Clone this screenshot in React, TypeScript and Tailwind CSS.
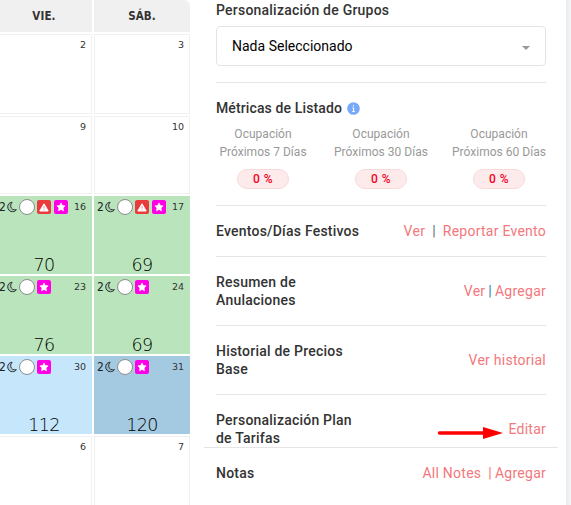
import type { ReactNode } from "react";

type Day = {
  date: number;
  price?: number;
  alert?: boolean;
  color?: string;
};

const weeks: Day[][] = [
  [{ date: 2 }, { date: 3 }],
  [{ date: 9 }, { date: 10 }],
  [
    { date: 16, price: 70, alert: true, color: "bg-[#bae4bc]" },
    { date: 17, price: 69, alert: true, color: "bg-[#bae4bc]" },
  ],
  [
    { date: 23, price: 76, color: "bg-[#bae4bc]" },
    { date: 24, price: 69, color: "bg-[#bae4bc]" },
  ],
  [
    { date: 30, price: 112, color: "bg-[#c6e7fb]" },
    { date: 31, price: 120, color: "bg-[#a4cae1]" },
  ],
  [{ date: 6 }, { date: 7 }],
];

const Moon = () => (
  <svg viewBox="0 0 10 12" className="mb-px ml-px h-3 w-2.5 shrink-0">
    <path
      d="M5.2 1.2C1.9 1.5 .7 3.7 .7 5.9C.7 8.7 2.8 10.7 5.5 10.7C7.3 10.7 8.7 9.9 9.4 8.7C6.4 9.4 3.9 7.9 3.7 5.2C3.6 3.6 4.1 2.2 5.2 1.2Z"
      fill="#30373a"
      fillOpacity=".15"
      stroke="#262b2d"
      strokeWidth=".95"
      strokeLinejoin="round"
    />
  </svg>
);

const Alert = () => (
  <span className="ml-0.5 flex size-3.5 shrink-0 items-center justify-center rounded-xs bg-[#e93b3e]">
    <svg viewBox="0 0 10 9" className="h-[9px] w-2.5">
      <path d="M5 .8 9.2 8H.8Z" fill="#fff" stroke="#fff" strokeWidth="1" strokeLinejoin="round" />
      <path d="M5 3.2v2.3M5 6.4v1" stroke="#e93b3e" strokeWidth=".6" />
    </svg>
  </span>
);

const Star = ({ className }: { className: string }) => (
  <span
    className={`${className} flex size-3.5 shrink-0 items-center justify-center rounded-xs bg-[#ff00e6]`}
  >
    <svg viewBox="0 0 10 10" className="size-2.5">
      <path
        d="m5 .9 1.2 2.6 2.9.4-2.1 2 .5 2.9L5 7.4 2.5 8.8 3 5.9.9 3.9l2.9-.4Z"
        fill="#fff"
        stroke="#fff"
        strokeWidth=".7"
        strokeLinejoin="round"
      />
    </svg>
  </span>
);

const DayCell = ({ day }: { day: Day }) => {
  if (!day.price) {
    return (
      <div className="border border-[#f0f0f0] pt-[3px] pr-[5px] text-right font-['DejaVu_Sans',sans-serif] text-[9.5px] leading-[13px] text-[#333]">
        {day.date}
      </div>
    );
  }
  return (
    <div className={`${day.color} flex flex-col justify-between`}>
      <div className="flex h-[22px] items-center pr-1.5 pl-[3px]">
        <span className="w-[7px] text-[12px] tracking-[-0.5px] text-[#222]">2</span>
        <Moon />
        <span className="ml-[2px] size-4 shrink-0 rounded-full border-[1.5px] border-[#8c8c8c] bg-white" />
        {day.alert && <Alert />}
        <Star className={day.alert ? "ml-[3px]" : "ml-0.5"} />
        <span className="ml-auto font-['DejaVu_Sans',sans-serif] text-[9.5px] tracking-[-0.1px] text-[#333]">
          {day.date}
        </span>
      </div>
      <div className="pt-0.5 text-center font-['DejaVu_Sans_Light','DejaVu_Sans',sans-serif] text-[17.5px] leading-[18px] font-extralight tracking-[-0.7px] text-black">
        {day.price}
      </div>
    </div>
  );
};

const Calendar = () => (
  <div className="-ml-1 grid w-[194px] shrink-0 grid-cols-[96px_96px] grid-rows-[32px_80px_78px_78px_78px_78px_78px] gap-0.5 self-start font-['DejaVu_Sans_Condensed','DejaVu_Sans',sans-serif]">
    <div className="flex items-center justify-center bg-[#f0f0f0] pt-0.5 text-[11.5px] font-bold tracking-[0.1px] text-[#333]">
      VIE.
    </div>
    <div className="flex items-center justify-center rounded-tr-md bg-[#f0f0f0] pt-0.5 text-[11.5px] font-bold tracking-[0.1px] text-[#333]">
      SÁB.
    </div>
    {weeks.flat().map((day, i) => (
      <DayCell key={i} day={day} />
    ))}
  </div>
);

const Metric = ({ period }: { period: string }) => (
  <div className="flex w-[94px] flex-col items-center text-[12px] leading-[18px] whitespace-nowrap text-[#999]">
    <span>Ocupación</span>
    <span>{period}</span>
    <span className="mt-2 flex h-5 w-[52px] items-center justify-center rounded-full border border-[#f8d9da] bg-[#fdebec] font-medium tracking-[0.5px] text-[#f4001c]">
      0 %
    </span>
  </div>
);

const Row = ({ className, title, children }: { className: string; title: ReactNode; children: ReactNode }) => (
  <div className={`${className} flex justify-between leading-[18px] whitespace-nowrap`}>
    <div className="font-medium text-[#333]">{title}</div>
    <div className="flex tracking-[0.25px] text-[#f3777c]">{children}</div>
  </div>
);

const Sidebar = () => (
  <div className="ml-[14px] w-[354px] shrink-0 text-[14px] tracking-[0.22px]">
    <div className="px-3">
      <div className="h-[26px] pt-px leading-[18px] font-medium text-[#333]">
        <span>Personalización de Grupos</span>
      </div>
      <div className="flex h-10 items-center justify-between rounded border border-[#e4e4e4] pt-px pr-[15px] pl-[15px] text-black">
        <span className="tracking-[0.01px]">Nada Seleccionado</span>
        <svg viewBox="0 0 8 4" className="mt-[2px] h-1 w-2">
          <path d="M0 0h8L4 4Z" fill="#999" />
        </svg>
      </div>
      <div className="mt-4 border-t border-[#e5e5e5] pt-4">
        <div className="flex h-[18px] items-center font-medium text-[#333]">
          <span className="tracking-[0.12px]">Métricas de Listado</span>
          <svg viewBox="0 0 13 13" className="ml-[5px] size-[13px]">
            <circle cx="6.5" cy="6.5" r="6.3" fill="#77a9fa" />
            <path d="M6.5 3v1.4M5.4 5.9h1.2v3.6M5.2 9.6h2.7" stroke="#fff" fill="none" />
          </svg>
        </div>
        <div className="mt-2 flex h-20 justify-between tracking-[0.02px]">
          <Metric period="Próximos 7 Días" />
          <Metric period="Próximos 30 Días" />
          <Metric period="Próximos 60 Días" />
        </div>
      </div>
      <Row className="h-[51px] items-center border-t border-[#e5e5e5]" title="Eventos/Días Festivos">
        <span>Ver</span>
        <span className="mx-[7px] text-[#57717a]">|</span>
        <span>Reportar Evento</span>
      </Row>
      <Row
        className="h-[69px] items-center border-t border-[#e5e5e5]"
        title={<>Resumen de<br />Anulaciones</>}
      >
        <span>Ver</span>
        <span className="mx-[3px] text-[#287fae]">|</span>
        <span>Agregar</span>
      </Row>
      <Row
        className="h-[69px] items-center border-t border-[#e5e5e5]"
        title={<>Historial de Precios<br />Base</>}
      >
        <span>Ver historial</span>
      </Row>
      <Row
        className="h-[53px] border-t border-[#e5e5e5] pt-4"
        title={<>Personalización Plan<br />de Tarifas</>}
      >
        <svg viewBox="0 0 66 12" className="mt-4 mr-[5px] h-3 w-[66px]">
          <path d="M2.5 6H48" stroke="red" strokeWidth="3.5" strokeLinecap="round" />
          <path d="M46 0 66 6 46 12Z" fill="red" />
        </svg>
        <span className="pt-[9px]">Editar</span>
      </Row>
    </div>
    <Row className="h-[51px] items-center border-t border-[#e5e5e5] px-3" title="Notas">
      <span>All Notes</span>
      <span className="mr-[3px] ml-[7px]">|</span>
      <span>Agregar</span>
    </Row>
  </div>
);

export default function App() {
  return (
    <div className="flex h-[505px] w-[571px] overflow-hidden bg-white font-[Roboto,sans-serif]">
      <Calendar />
      <Sidebar />
      <div className="ml-auto w-[5px] shrink-0 bg-linear-to-r from-[#eaebed] to-[#f4f5f7]" />
    </div>
  );
}
